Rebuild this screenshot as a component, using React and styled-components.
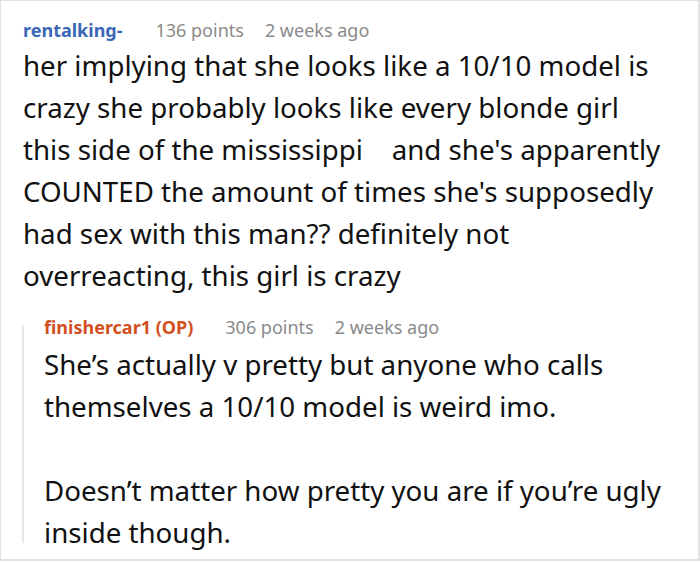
import styled, { createGlobalStyle } from 'styled-components';

const GlobalStyle = createGlobalStyle`
    html, body {
        margin: 0;
        padding: 0;
        background: #ffffff;
    }
    body {
        font-family: "Noto Sans", "Open Sans", sans-serif;
    }
`;

// lines are kept as they wrap in the original screenshot
const comment = {
    author: 'rentalking-',
    points: '136 points',
    time: '2 weeks ago',
    body: [
        [
            'her implying that she looks like a 10/10 model is',
            'crazy she probably looks like every blonde girl',
            "this side of the mississippi \u00a0\u00a0\u00a0and she's apparently",
            "COUNTED the amount of times she's supposedly",
            'had sex with this man?? definitely not',
            'overreacting, this girl is crazy',
        ],
    ],
    reply: {
        author: 'finishercar1 (OP)',
        points: '306 points',
        time: '2 weeks ago',
        body: [
            [
                'She\u2019s actually v pretty but anyone who calls',
                'themselves a 10/10 model is weird imo.',
            ],
            [
                'Doesn\u2019t matter how pretty you are if you\u2019re ugly',
                'inside though.',
            ],
        ],
    },
};

function Body({ paragraphs }) {
    return paragraphs.map((lines, i) => (
        <Paragraph key={i}>
            {lines.map((l, j) => <Line key={j}>{l}</Line>)}
        </Paragraph>
    ));
}

export default function App() {
    return (
        <>
            <GlobalStyle />
            <Card>
                <Comment>
                    <Meta>
                        <Author $op={false}>{comment.author}</Author>
                        <Info>{comment.points}</Info>
                        <Info>{comment.time}</Info>
                    </Meta>
                    <Body paragraphs={comment.body} />
                </Comment>
                <Reply>
                    <Meta $reply>
                        <Author $op={true}>{comment.reply.author}</Author>
                        <Info>{comment.reply.points}</Info>
                        <Info>{comment.reply.time}</Info>
                    </Meta>
                    <Body paragraphs={comment.reply.body} />
                </Reply>
            </Card>
        </>
    );
}

const Card = styled.div`
    width: 700px;
    height: 561px;
    box-sizing: border-box;
    border: 1px solid #e2e2e2;
    border-right-width: 2px;
    border-bottom-width: 2px;
    padding: 15px 18px 0 22px;
    overflow: hidden;
`;

const Comment = styled.div`
    display: flex;
    flex-direction: column;
`;

const Meta = styled.div`
    display: flex;
    align-items: baseline;
    gap: 21px;
    height: 28px;
    line-height: 28px;
    margin-bottom: ${p => (p.$reply ? '2px' : '0')};
`;

const Author = styled.span`
    font-size: 18px;
    font-weight: 700;
    color: ${p => (p.$op ? '#d2501f' : '#3a67b6')};
    margin-right: ${p => (p.$op ? '11px' : '12px')};
`;

const Info = styled.span`
    font-size: 18px;
    color: #8a8a8a;
`;

const Paragraph = styled.p`
    margin: 0 0 42px 0;
    font-size: 27.7px;
    line-height: 42px;
    color: #111111;
    &:last-child {
        margin-bottom: 0;
    }
`;

const Line = styled.span`
    display: block;
    white-space: nowrap;
`;

const Reply = styled.div`
    position: relative;
    display: flex;
    flex-direction: column;
    margin-top: 17px;
    padding-left: 21px;
    &::before {
        content: '';
        position: absolute;
        left: -1px;
        top: 12px;
        bottom: 10px;
        width: 2px;
        background: #e6e6e6;
    }
`;
